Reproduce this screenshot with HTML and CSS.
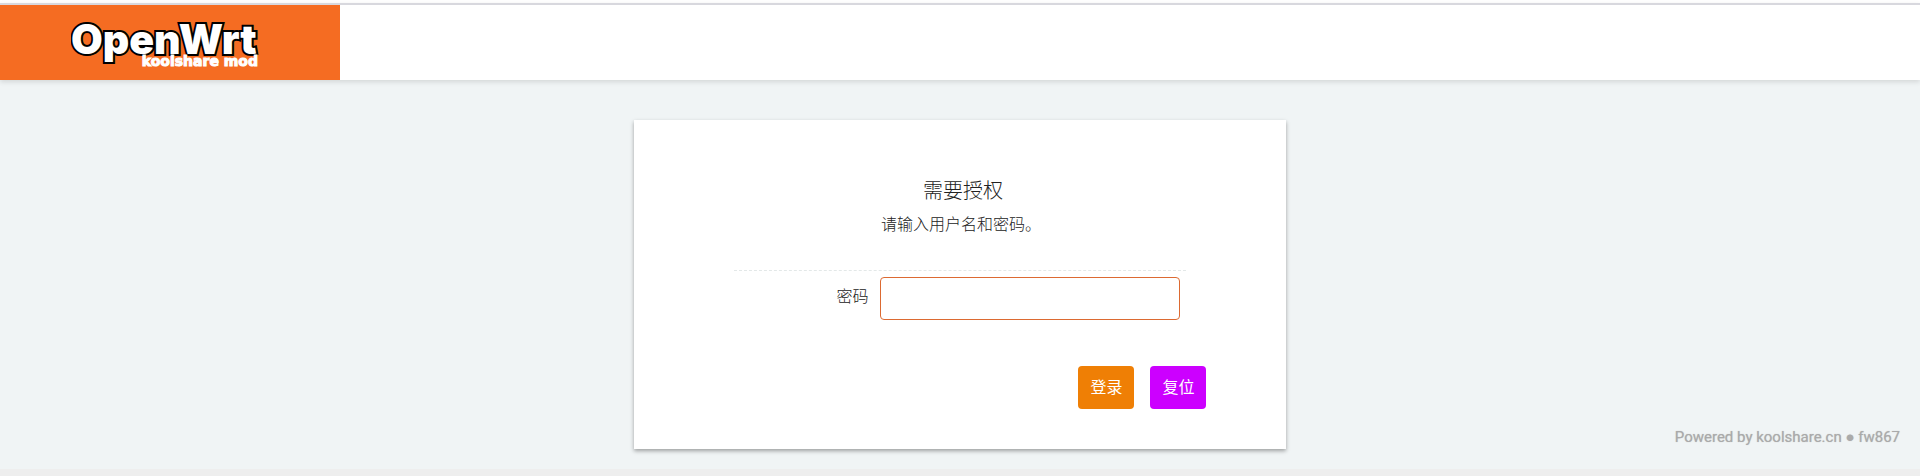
FILE: index.html
```html
<!DOCTYPE html>
<html lang="zh-CN">
<head>
    <meta charset="utf-8">
    <meta name="viewport" content="width=device-width, initial-scale=1">
    <title>OpenWrt</title>
    <link rel="stylesheet" href="styles.css">
</head>
<body>

<header>
    <a class="brand" href="#">
        <svg width="200" height="60" viewBox="0 0 200 60" role="img" aria-label="OpenWrt koolshare mod">
            <text class="brand-name" x="0" y="40">OpenWrt</text>
            <text class="brand-mod" x="187" y="52" text-anchor="end">koolshare mod</text>
        </svg>
    </a>
</header>

<main>
    <form class="login" method="post">
        <h2>需要授权</h2>
        <p>请输入用户名和密码。</p>

        <!-- Password -->
        <div class="field">
            <label for="password">密码</label>
            <input type="password" id="password" name="password">
        </div>

        <!-- Actions -->
        <div class="actions">
            <button type="submit" class="btn btn-apply">登录</button>
            <button type="reset" class="btn btn-reset">复位</button>
        </div>
    </form>

    <footer><a href="#">Powered by koolshare.cn ● fw867</a></footer>
</main>

</body>
</html>
```

FILE: styles.css
```css
* {
    box-sizing: border-box;
}

body {
    display: flex;
    flex-direction: column;
    min-height: 100vh;
    margin: 0;
    padding-top: 3px;
    background-color: #fff;
    color: #222;
    font-family: "Noto Sans CJK SC", "Noto Sans", sans-serif;
    font-size: 16px;
    font-weight: 300;
    line-height: 24px;
}

header {
    position: relative;
    display: flex;
    border-top: 2px solid #d8d8de;
    background-color: #fff;
    box-shadow: 0 2px 5px rgba(0, 0, 0, 0.12);
}

.brand {
    display: flex;
    width: 340px;
    height: 75px;
    padding: 9px 0 0 71px;
    background-color: #f56c22;
}

.brand-name {
    font-family: "Inter", sans-serif;
    font-size: 41px;
    font-weight: 900;
    fill: #fff;
    stroke: #000;
    stroke-width: 4px;
    paint-order: stroke;
}

.brand-mod {
    font-family: "DejaVu Sans", sans-serif;
    font-size: 14px;
    font-weight: bold;
    fill: #fff;
    stroke: #fff;
    stroke-width: 1px;
}

main {
    display: flex;
    flex: 1;
    flex-direction: column;
    padding: 40px 0 20px;
    border-bottom: 7px solid #eee;
    background-color: #f0f4f5;
}

.login {
    width: 34%;
    min-width: 480px;
    margin: 0 auto;
    padding: 56px 80px 40px 100px;
    background-color: #fff;
    box-shadow: 0 2px 4px rgba(0, 0, 0, 0.35);
}

.login h2 {
    margin: 0 14px 7px 0;
    font-size: 20px;
    font-weight: 300;
    line-height: 28px;
    text-align: center;
}

.login p {
    margin: 0 18px 0 0;
    padding-bottom: 35px;
    text-align: center;
}

.field {
    display: flex;
    justify-content: flex-end;
    margin-right: 20px;
    padding: 6px 6px 0 0;
    border-top: 1px dashed #e3e8e8;
}

.field label {
    padding: 6px 12px 0 0;
}

.field input {
    width: 300px;
    height: 43px;
    padding: 8px 12px;
    border: 1px solid #dc6a32;
    border-radius: 4px;
    background-color: #fff;
    font-size: 16px;
}

.actions {
    display: flex;
    justify-content: flex-end;
    gap: 16px;
    margin-top: 46px;
}

.btn {
    width: 56px;
    height: 43px;
    padding: 0 0 4px;
    border: none;
    border-radius: 4px;
    color: #fff;
    font-family: inherit;
    font-size: 16px;
    cursor: pointer;
}

.btn-apply {
    background-color: #ef7f05;
}

.btn-reset {
    background-color: #cc00ff;
}

footer {
    position: absolute;
    right: 20px;
    bottom: 29px;
    font-family: Roboto, sans-serif;
    font-size: 15px;
    font-weight: 400;
    line-height: 20px;
}

footer a {
    color: #aaa;
    text-decoration: none;
    text-shadow: 0 0 1px #bbb;
}
```
